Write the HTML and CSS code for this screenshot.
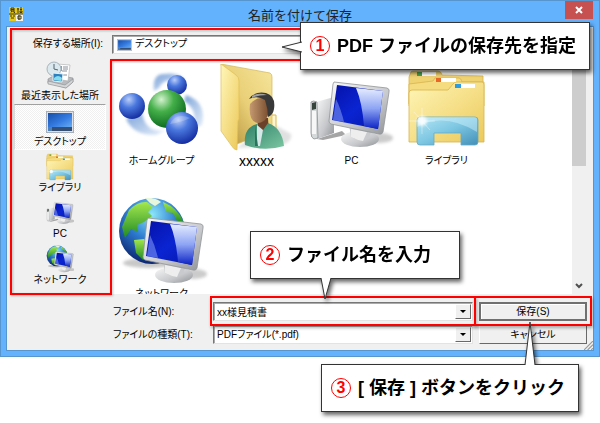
FILE: index.html
```html
<!DOCTYPE html>
<html lang="ja">
<head>
<meta charset="utf-8">
<title>名前を付けて保存</title>
<link rel="stylesheet" href="styles.css">
</head>
<body>
<svg class="defs" aria-hidden="true">
  <defs>
    <radialGradient id="blueBall" cx=".38" cy=".25" r=".8"><stop offset="0" stop-color="#b9cdf8"/><stop offset=".4" stop-color="#4a78de"/><stop offset="1" stop-color="#10279c"/></radialGradient>
    <radialGradient id="greenBall" cx=".35" cy=".25" r=".8"><stop offset="0" stop-color="#d5f2cf"/><stop offset=".4" stop-color="#45b04a"/><stop offset="1" stop-color="#07631a"/></radialGradient>
    <linearGradient id="swoosh" x1="0" y1="0" x2="1" y2="1"><stop offset="0" stop-color="#7da3d8"/><stop offset="1" stop-color="#e8f1fb"/></linearGradient>
    <linearGradient id="flap" x1="0" y1="0" x2="1" y2="1"><stop offset="0" stop-color="#fff6b8"/><stop offset="1" stop-color="#ecc95a"/></linearGradient>
    <linearGradient id="back" x1="0" y1="1" x2="1" y2="0"><stop offset="0" stop-color="#ad8b35"/><stop offset=".5" stop-color="#e9cf77"/><stop offset="1" stop-color="#f7e69c"/></linearGradient>
    <linearGradient id="skin" x1="0" y1="0" x2="1" y2="0"><stop offset="0" stop-color="#c59a70"/><stop offset="1" stop-color="#74482b"/></linearGradient>
    <linearGradient id="shirt" x1="0" y1="0" x2="1" y2="1"><stop offset="0" stop-color="#2e8069"/><stop offset="1" stop-color="#7cc7a2"/></linearGradient>
    <linearGradient id="screen" x1="0" y1="0" x2="1" y2="1"><stop offset="0" stop-color="#0511a8"/><stop offset=".5" stop-color="#0a24d2"/><stop offset="1" stop-color="#0416a8"/></linearGradient>
    <linearGradient id="glare" x1="0" y1="0" x2="0" y2="1"><stop offset="0" stop-color="#e6ecff"/><stop offset=".5" stop-color="#8ea4f4"/><stop offset="1" stop-color="#0b22c6"/></linearGradient>
    <linearGradient id="metal" x1="0" y1="0" x2="1" y2="1"><stop offset="0" stop-color="#fafafa"/><stop offset=".6" stop-color="#c6c8cb"/><stop offset="1" stop-color="#8f9296"/></linearGradient>
    <linearGradient id="stand" x1="0" y1="0" x2="1" y2="1"><stop offset="0" stop-color="#b5e6f4"/><stop offset=".5" stop-color="#7cc6e2"/><stop offset="1" stop-color="#438fb8"/></linearGradient>
    <radialGradient id="globe" cx=".5" cy=".25" r=".75"><stop offset="0" stop-color="#8be6fa"/><stop offset=".5" stop-color="#2c7bd0"/><stop offset="1" stop-color="#0c2672"/></radialGradient>
    <linearGradient id="land" x1="0" y1="0" x2="0" y2="1"><stop offset="0" stop-color="#a4e84e"/><stop offset="1" stop-color="#1f8a23"/></linearGradient>
    <linearGradient id="deskScreen" x1="0" y1="0" x2="1" y2="1"><stop offset="0" stop-color="#174fa8"/><stop offset=".55" stop-color="#347ae0"/><stop offset="1" stop-color="#65acf5"/></linearGradient>
    <filter id="soft" x="-30%" y="-30%" width="160%" height="160%"><feGaussianBlur stdDeviation="1.6"/></filter>

    <symbol id="homegroup" viewBox="0 0 95 88">
      <g fill="url(#swoosh)" filter="url(#soft)">
        <path d="M40 27Q38 10 50 10Q64 8 71 16L60 17Q50 14 45 24Z"/>
        <path d="M12 55Q20 72 42 71L52 66Q32 70 28 49Z"/>
        <path d="M72 31Q93 38 88 61L78 65Q86 47 70 37Z"/>
      </g>
      <circle cx="63" cy="21" r="10" fill="url(#blueBall)"/>
      <circle cx="18" cy="42" r="13" fill="url(#blueBall)"/>
      <circle cx="53" cy="45" r="19" fill="url(#greenBall)"/>
      <circle cx="68" cy="64" r="16" fill="url(#blueBall)"/>
      <path d="M56 60Q62 48 76 54Q68 58 56 60" fill="#fff" opacity=".2"/>
    </symbol>

    <symbol id="userfolder" viewBox="0 0 95 88">
      <path d="M28 84L60 58L82 70Q84 78 70 82Z" fill="#bbb" opacity=".45" filter="url(#soft)"/>
      <path d="M61 51h6v14h-6z" fill="#fff6cf" stroke="#d6b751"/>
      <path d="M12 0L61 9Q63 10 63 13V66L28 80Z" fill="url(#back)" stroke="#d5b654" stroke-width=".7"/>
      <path d="M12 0L27 11Q30 13 30 17V55L29 57L28 86Q25 86 22 81L12 67Z" fill="url(#flap)" stroke="#e0bf58" stroke-width=".7"/>
      <path d="M49 54h10l1 16H48z" fill="#6b4129"/>
      <path d="M41 40Q39 58 49 59Q61 58 61 38Q51 29 41 40Z" fill="url(#skin)"/>
      <path d="M40 35Q45 27 57 29Q67 32 65 45Q64 51 59 53Q59 45 56 36Q48 31 40 35Z" fill="#393939"/>
      <path d="M43 32Q50 28 58 31Q49 31 43 34Z" fill="#a0a0a0"/>
      <path d="M36 81Q34 64 48 60L52 69L59 59Q73 64 75 82Q55 88 36 81Z" fill="url(#shirt)"/>
      <path d="M48 61L54 66L51 82H48Z" fill="#d5e7e6"/>
      <path d="M46 61L49 82H46Z" fill="#2b735f"/>
    </symbol>

    <symbol id="monitor" viewBox="0 0 95 88">
      <ellipse cx="76" cy="74" rx="13" ry="5" fill="#999" opacity=".5" filter="url(#soft)"/>
      <ellipse cx="56" cy="75" rx="19" ry="8" fill="url(#metal)"/>
      <path d="M45 60L68 65L65 74Q56 79 47 73Z" fill="#c8cacd"/>
      <path d="M47 65L63 68L59 77Q53 76 47 73Z" fill="#eee"/>
      <path d="M30 18L83 24Q86 25 85 28L79 68Q78 71 75 70L27 60Q25 59 25 57L29 20Z" fill="url(#metal)" stroke="#929497" stroke-width=".8"/>
      <path d="M33 21L79 27L74 65L28 56Z" fill="url(#screen)"/>
      <path d="M52 24L79 27L74 65L60 62Q58 38 52 24Z" fill="url(#glare)"/>
      <path d="M32 35Q37 45 40 58L29 56Z" fill="#7289ee" opacity=".65"/>
    </symbol>

    <symbol id="pc" viewBox="0 0 95 88">
      <path d="M13 75L38 67L42 71L19 76Z" fill="#a5a5a5"/>
      <path d="M12 38L30 33V69L13 75Z" fill="url(#metal)"/>
      <path d="M7 38Q9 36 13 38L14 74L10 75Q7 74 7 69Z" fill="#d6d9da" stroke="#838587" stroke-width=".7"/>
      <path d="M8 39L12 38V45L8 46Z" fill="#38453c"/>
      <path d="M8 47H12V70H8Z" fill="#f7f7f7"/>
      <use href="#monitor" width="95" height="88"/>
    </symbol>

    <symbol id="library" viewBox="0 0 95 88">
      <g stroke="#d8b44d" stroke-width=".8">
        <path d="M10 28V13L12 8Q13 7 15 7H39Q42 7 43 11L84 12V40H10Z" fill="#efd272"/>
        <path d="M10 34V20L34 17L36 14H60Q62 14 63 18H85V42H10Z" fill="#f5dc80"/>
        <path d="M10 78V29Q10 26 13 26H49L54 20Q55 18 58 18H83Q85 18 85 21V78Z" fill="url(#flap)"/>
      </g>
      <path d="M23 8h14v4H23zM42 14h15v4H42zM60 20h16v4H60z" fill="#fff"/>
      <path d="M18 8h5v4h-5z" fill="#47a14b"/><path d="M37 14h5v4h-5z" fill="#e76726"/><path d="M56 20h6v4h-6z" fill="#2b9be2"/>
      <path d="M18 56Q18 53 21 53H76Q79 53 79 56V78Q79 81 76 81H62V69H35V81H21Q18 81 18 78Z" fill="url(#stand)" stroke="#66aac5" stroke-width=".8"/>
      <path d="M18 63Q45 48 78 68V55Q78 53 75 53H20Z" fill="#d4f3fc" opacity=".45"/>
      <circle cx="23" cy="57" r="5" fill="#fff" opacity=".85" filter="url(#soft)"/>
      <path d="M23 44V70M10 57H36M15 48L31 66" stroke="#fff" stroke-width=".6" opacity=".6"/>
    </symbol>

    <symbol id="network" viewBox="0 0 95 88">
      <ellipse cx="35" cy="66" rx="26" ry="5" fill="#777" opacity=".4" filter="url(#soft)"/>
      <circle cx="38" cy="34" r="33" fill="url(#globe)"/>
      <g fill="url(#land)">
        <path d="M15 13Q24 4 33 5L39 10L34 15L38 19L30 25L23 28L24 35L17 32L11 41L8 30Z"/>
        <path d="M20 43L30 42L38 50L36 59L29 63L22 56Z"/>
        <path d="M49 5Q64 11 70 26L63 24L59 16L52 15Z"/>
      </g>
      <path d="M31 1Q40 0 47 5L41 9L36 6Z" fill="#e8f6dc"/>
      <use href="#monitor" x="4" y="3" width="95" height="88"/>
    </symbol>

    <symbol id="desktop" viewBox="0 0 28 22">
      <path d="M0 0H28V22H0Z" fill="#a5aebb"/><path d="M1 1H27V21H1Z" fill="#dde1e7"/>
      <path d="M2 2H26V16H2Z" fill="url(#deskScreen)"/><path d="M2 16H26V20H2Z" fill="#355077"/>
      <path d="M2 16H6V20H2Z" fill="#4e81b9"/>
    </symbol>

    <symbol id="recent" viewBox="0 0 28 28">
      <path d="M2 18L9 14L27 17V21L20 27L2 22Z" fill="#b8babd" stroke="#898b8e" stroke-width=".6"/>
      <path d="M11 3L24 4L22 20L10 18Z" fill="#fff" stroke="#aaa" stroke-width=".6"/>
      <path d="M17 6H22M17 8H22M16 10H21M17 14H21" stroke="#8a929b"/>
      <path d="M13 5h3v5h-3z" fill="#74a3c8"/>
      <circle cx="8" cy="8" r="7" fill="#dbe8ee" stroke="#a9b5bc"/>
      <path d="M8 3V8L12 9" fill="none" stroke="#55656e"/>
      <path d="M7 12L17 13L16 21L7 20Z" fill="#2c80bd" stroke="#e5f1f8"/><path d="M8 17Q12 13 16 17L15 20L8 19Z" fill="#84dcef"/>
      <path d="M2 20L19 24L27 18V21L20 27L2 23Z" fill="#d4d6d8" stroke="#8c8e91" stroke-width=".6"/>
    </symbol>
  </defs>
</svg>

<main class="stage">
  <section class="window">
    <header class="titlebar">
      <svg class="app-icon" viewBox="0 0 14 14" aria-hidden="true">
        <path d="M0 0H14V14H0Z" fill="#e7c91b"/><path d="M7 7H14V14H7Z" fill="#f5f5ed"/>
        <path d="M2 1H5V4H2ZM2 2.5H5M2 5.5L3 4M5 4V5.5H6M8 2H10M9 1V6M11 1H13M11 2.5H13M11 4H13V5.5H11ZM1 9H3M4 9H6M2 11H5M9 9H12V12H9ZM10 8V13M0 7H14" fill="none" stroke="#40380a"/>
      </svg>
      <h1 class="title">名前を付けて保存</h1>
      <button class="close" type="button" aria-label="閉じる"><svg viewBox="0 0 8 8" aria-hidden="true"><path d="M1 1L7 7M7 1L1 7" stroke="#fff" stroke-width="2"/></svg></button>
    </header>

    <form class="dialog">
      <div class="lookup">
        <label class="lookup-label" for="place">保存する場所(I):</label>
        <div class="combo">
          <svg class="combo-icon" viewBox="0 0 28 22" aria-hidden="true"><use href="#desktop"/></svg>
          <select id="place" class="field with-icon"><option>デスクトップ</option></select>
          <span class="arrow" aria-hidden="true"></span>
        </div>
      </div>

      <div class="browser">
        <nav class="places">
          <button class="place" type="button"><svg class="place-icon" aria-hidden="true"><use href="#recent"/></svg>最近表示した場所</button>
          <button class="place selected" type="button"><svg class="place-icon small" aria-hidden="true"><use href="#desktop"/></svg>デスクトップ</button>
          <button class="place" type="button"><svg class="place-icon" viewBox="8 4 80 80" aria-hidden="true"><use href="#library" width="95" height="88"/></svg>ライブラリ</button>
          <button class="place" type="button"><svg class="place-icon" viewBox="4 10 84 80" aria-hidden="true"><use href="#pc" width="95" height="88"/></svg>PC</button>
          <button class="place" type="button"><svg class="place-icon" viewBox="3 0 88 88" aria-hidden="true"><use href="#network" width="95" height="88"/></svg>ネットワーク</button>
        </nav>
        <div class="list">
          <ul class="files">
            <li class="file"><svg class="file-icon" aria-hidden="true"><use href="#homegroup"/></svg>ホームグループ</li>
            <li class="file"><svg class="file-icon" aria-hidden="true"><use href="#userfolder"/></svg><span class="user">xxxxx</span></li>
            <li class="file"><svg class="file-icon" aria-hidden="true"><use href="#pc"/></svg>PC</li>
            <li class="file"><svg class="file-icon" aria-hidden="true"><use href="#library"/></svg>ライブラリ</li>
            <li class="file"><svg class="file-icon" aria-hidden="true"><use href="#network"/></svg>ネットワーク</li>
          </ul>
          <div class="scrollbar" aria-hidden="true">
            <div class="thumb"></div>
            <svg class="chevron" viewBox="0 0 8 6"><path d="M1 1L4 4L7 1" fill="none" stroke="#505050" stroke-width="2"/></svg>
          </div>
        </div>
      </div>

      <div class="fields">
        <label for="name">ファイル名(N):</label>
        <div class="combo marked">
          <input id="name" class="field" type="text" value="xx様見積書">
          <span class="arrow" aria-hidden="true"></span>
        </div>
        <div class="action marked"><button class="push default" type="submit">保存(S)</button></div>
        <label for="type">ファイルの種類(T):</label>
        <div class="combo">
          <select id="type" class="field"><option>PDFファイル(*.pdf)</option></select>
          <span class="arrow" aria-hidden="true"></span>
        </div>
        <div class="action"><button class="push" type="button">キャンセル</button></div>
      </div>
      <svg class="grip" viewBox="0 0 10 10" aria-hidden="true"><path d="M0 10L10 0M4 10L10 4M8 10L10 8" stroke="#999" stroke-width="1.3"/></svg>
    </form>
  </section>

  <svg class="region" viewBox="0 0 590 270" aria-hidden="true"><path d="M560 3H2V268H102V34H560" fill="none" stroke="#f00" stroke-width="2"/></svg>

  <aside class="callout where">
    <svg class="tail" viewBox="0 0 21 12" aria-hidden="true"><path d="M21 1L1 6L21 11" fill="#fff" stroke="#333"/></svg>
    <span class="num">1</span><span>PDF ファイルの保存先を指定</span>
  </aside>
  <aside class="callout naming">
    <svg class="tail" viewBox="0 0 12 22" aria-hidden="true"><path d="M1 0L5 21L11 0" fill="#fff" stroke="#333"/></svg>
    <span class="num">2</span><span>ファイル名を入力</span>
  </aside>
  <aside class="callout saving">
    <svg class="tail" viewBox="0 0 12 44" aria-hidden="true"><path d="M1 44L6 1L11 44" fill="#fff" stroke="#333"/></svg>
    <span class="num">3</span><span>[ 保存 ] ボタンをクリック</span>
  </aside>
</main>
</body>
</html>
```

FILE: styles.css
```css
* { box-sizing: border-box; }

body {
  margin: 0;
  background: #fff;
  color: #000;
  font: 10px/14px "Liberation Sans", "Noto Sans CJK JP", sans-serif;
  font-feature-settings: "palt";
}

button, input, select {
  margin: 0;
  color: inherit;
  font: inherit;
  font-feature-settings: inherit;
}

.defs { position: absolute; width: 0; height: 0; }

/* Room under the window for the callout that hangs below it */
.stage { position: relative; padding-bottom: 66px; }

/* Window frame */
.window {
  padding: 0 6px 6px;
  border: 1px solid #5795cf;
  background: #63b2fd;
}

.titlebar {
  display: grid;
  grid-template-columns: 28px 1fr 28px;
  align-items: start;
  height: 26px;
}

.app-icon { width: 14px; height: 14px; margin: 6px 0 0 2px; }

.title {
  margin: 0;
  padding-top: 4px;
  color: #222;
  font: 13px/20px "Noto Sans CJK JP", sans-serif;
  text-align: center;
}

.close {
  display: grid;
  place-items: center;
  height: 18px;
  padding: 0;
  border: 0;
  background: #c75050;
}
.close svg { width: 8px; height: 8px; }

.dialog {
  position: relative;
  background: #f0f0f0;
  box-shadow: 0 0 0 1px #5795cf;
}

/* Folder picker row */
.lookup {
  display: flex;
  align-items: center;
  gap: 9px;
  height: 31px;
  padding: 3px 120px 0 0;
}
.lookup-label { width: 96px; text-align: right; white-space: nowrap; }
.lookup .combo { flex: 1; }

.combo { position: relative; min-width: 0; }
.combo-icon {
  position: absolute;
  top: 4px;
  left: 5px;
  width: 15px;
  height: 12px;
}
.field {
  display: block;
  width: 100%;
  height: 19px;
  padding: 0 20px 0 3px;
  appearance: none;
  border: 1px solid;
  border-color: #777 #e3e3e3 #e3e3e3 #777;
  border-radius: 0;
  outline: 0;
  background: #fff;
  box-shadow: inset 1px 1px #aaa;
}
.with-icon { padding-left: 22px; }
.arrow {
  position: absolute;
  top: 2px;
  right: 2px;
  display: grid;
  place-items: center;
  width: 16px;
  height: 15px;
  border: 1px solid;
  border-color: #fff #696969 #696969 #fff;
  background: #f0f0f0;
  pointer-events: none;
}
.arrow::after {
  content: "";
  border: 3px solid transparent;
  border-top-color: #000;
  border-bottom: 0;
}

/* Places bar and file list */
.browser { display: grid; grid-template-columns: 105px 1fr; }

.places { display: grid; align-content: start; padding: 0 6px 0 7px; }
.place {
  display: flex;
  flex-direction: column;
  align-items: center;
  justify-content: flex-end;
  height: 46px;
  padding: 0 0 1px;
  border: 0;
  background: none;
  white-space: nowrap;
}
.place-icon { width: 28px; height: 28px; }
.place-icon.small { height: 22px; margin-bottom: 2px; }
.selected {
  padding-bottom: 0;
  border: 1px solid;
  border-color: #a0a0a0 #fff #fff #e0e0e0;
  background: repeating-conic-gradient(#fff 0 25%, #f0f0f0 0 50%) 0 0 / 2px 2px;
}

.list {
  display: grid;
  grid-template-columns: 1fr 14px;
  height: 234px;
  margin: 2px 7px 0 0;
  overflow: hidden;
  background: #fff;
}
.files {
  display: grid;
  grid-template-columns: repeat(auto-fill, 95px);
  grid-auto-rows: 133px;
  align-content: start;
  height: 234px;
  margin: 0;
  padding: 4px 0 0 2px;
  overflow: hidden;
  list-style: none;
}
.file {
  display: flex;
  flex-direction: column;
  align-items: center;
  gap: 2px;
  white-space: nowrap;
}
.file-icon { width: 95px; height: 88px; overflow: visible; }
.user { font-size: 14px; }
.scrollbar {
  display: flex;
  flex-direction: column;
  align-items: center;
  justify-content: space-between;
  padding-bottom: 5px;
  background: #f0f0f0;
}
.thumb { width: 100%; height: 106px; background: #cdcdcd; }
.chevron { width: 8px; height: 6px; }

/* File name, type and actions */
.fields {
  display: grid;
  grid-template-columns: 94px 1fr 108px;
  grid-auto-rows: 19px;
  gap: 4px 6px;
  align-items: center;
  padding: 8px 6px 6px 106px;
}
.fields label { white-space: nowrap; }
.action { position: relative; height: 19px; }
.push {
  display: block;
  width: 100%;
  height: 19px;
  padding: 0;
  border: 1px solid;
  border-color: #fff #696969 #696969 #fff;
  background: #f0f0f0;
}
.default {
  border: 2px solid #707070;
  box-shadow: inset 1px 1px #fff;
}
.marked::after {
  content: "";
  position: absolute;
  inset: -6px -3px -5px;
  z-index: 1;
  border: 2px solid #f00;
  box-shadow: 1px 2px 3px rgb(0 0 0 / 30%);
  pointer-events: none;
}
.action.marked::after { inset: -6px -5px -5px; }

.grip { position: absolute; right: 0; bottom: 0; width: 9px; height: 9px; }

/* Annotations */
.region {
  position: absolute;
  top: 26px;
  left: 9px;
  width: 590px;
  height: 270px;
  filter: drop-shadow(1px 1px 1px rgb(0 0 0 / 25%));
  pointer-events: none;
}
.callout {
  position: absolute;
  z-index: 2;
  display: flex;
  align-items: center;
  gap: 7px;
  height: 48px;
  padding: 0 9px;
  border: 1px solid #333;
  background: #fff;
  filter: drop-shadow(2px 3px 2px rgb(0 0 0 / 60%));
  font: bold 18px/24px "Liberation Sans", "Noto Sans CJK JP", sans-serif;
  font-feature-settings: normal;
  white-space: nowrap;
}
.num {
  display: grid;
  place-items: center;
  width: 20px;
  height: 20px;
  border: 1px solid #f00;
  border-radius: 50%;
  color: #f00;
  font-size: 16px;
  line-height: 18px;
}
.tail { position: absolute; }
.where { top: 22px; left: 300px; width: 290px; }
.where .tail { top: 18px; left: -20px; width: 21px; height: 12px; }
.naming { top: 231px; left: 250px; width: 210px; }
.naming .tail { top: 46px; left: 69px; width: 12px; height: 22px; }
.saving { top: 364px; left: 321px; width: 258px; }
.saving .tail { bottom: 46px; left: 202px; width: 12px; height: 44px; }
```
